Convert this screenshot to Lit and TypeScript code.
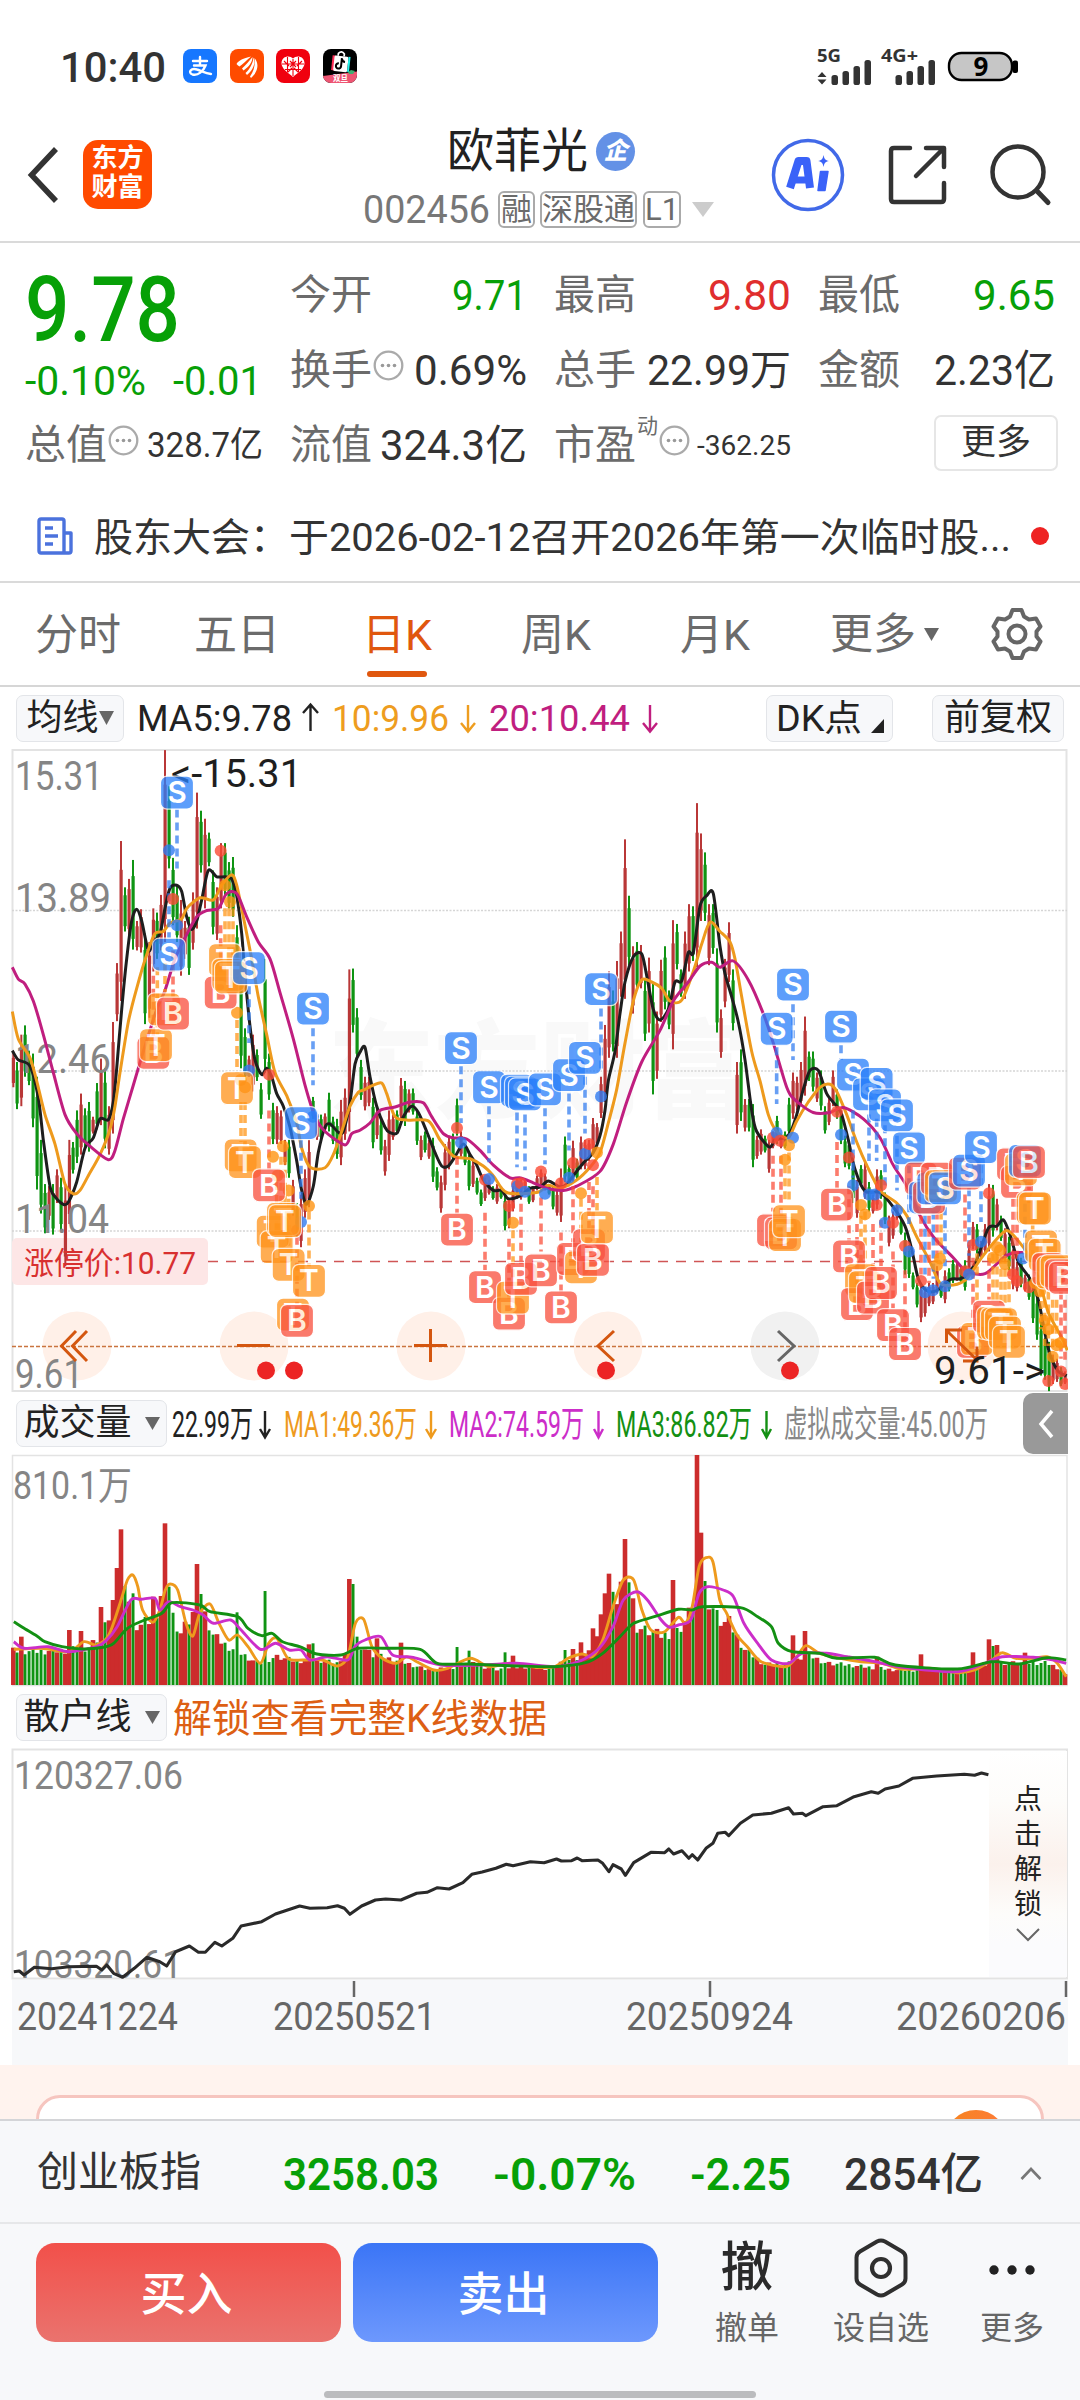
import { LitElement, html, svg, css } from "lit";
import { customElement, property } from "lit/decorators.js";

const RED = "#cc2c2c";
const GREEN = "#0f9413";
const UP = "#e02e2e";
const DOWN = "#07a007";

type Pt = [number, number];

/* ---------- helpers ---------- */

/** A run of text set to an exact width. */
const run = (t: string, w: number, size: number, color = "#333", weight = 400) => html`
  <svg class="run" width=${w} height=${size} viewBox="0 0 ${w} ${size}">
    <text x="0" y=${size * 0.86} font-size=${size} fill=${color} font-weight=${weight}
      textLength=${w} lengthAdjust="spacingAndGlyphs">${t}</text>
  </svg>`;

const parse = (s: string): Pt[] =>
  s.trim().split(/\s+/).map((p) => p.split(",").map(Number) as Pt);

const smooth = (p: Pt[]): string => {
  let d = `M${p[0][0].toFixed(1)} ${p[0][1].toFixed(1)}`;
  for (let i = 0; i < p.length - 1; i++) {
    const a = p[Math.max(0, i - 1)], b = p[i], c = p[i + 1], e = p[Math.min(p.length - 1, i + 2)];
    const k = 7;
    d += `C${[b[0] + (c[0] - a[0]) / k, b[1] + (c[1] - a[1]) / k, c[0] - (e[0] - b[0]) / k, c[1] - (e[1] - b[1]) / k, c[0], c[1]]
      .map((n) => n.toFixed(1)).join(" ")}`;
  }
  return d;
};

const straight = (p: Pt[]): string => "M" + p.map((q) => q.map((n) => n.toFixed(1)).join(" ")).join("L");

/* ---------- price chart data: three panels, each 360 wide ---------- */

const KX = 1 / 3;
const KY = 660 / 1568;
const px = (panel: number, x: number) => panel * 360 + x * KX;
const py = (y: number) => y * KY - 9;

const joinPanels = (parts: string[]): Pt[] =>
  parts.flatMap((s, i) => parse(s).map(([x, y]) => [px(i, x), py(y)] as Pt));

const MA5 = joinPanels([
  "37,738 55,760 90,775 115,850 130,950 150,1060 165,1085 190,1103 205,1098 230,1050 255,970 280,945 300,900 325,902 340,860 350,780 365,640 380,520 395,430 410,402 425,430 445,500 460,480 480,460 495,400 510,352 530,345 545,360 560,420 575,450 590,430 605,380 625,310 650,325 675,325 695,330 710,370 725,460 735,560 750,680 765,760 785,795 800,780 815,800 830,840 850,870 870,920 890,1000 905,1070 920,1103 940,1060 955,980 975,920 990,912 1015,932 1030,930 1050,860 1065,770 1080,742",
  "15,730 30,800 50,870 75,920 90,933 112,933 130,895 155,870 175,885 200,930 225,980 245,1012 265,1012 285,990 310,960 330,985 350,1010 370,1045 400,1070 425,1070 445,1090 480,1083 510,1065 540,1062 565,1048 600,1062 620,1055 640,1035 670,1005 700,980 720,940 735,880 745,810 765,740 780,650 795,575 820,515 845,508 860,560 880,640 900,665 925,640 945,575 965,572 985,505 1000,505 1020,395 1040,370 1060,365",
  "0,490 15,555 35,610 55,670 75,760 95,880 110,930 148,967 165,950 200,943 215,925 230,890 250,830 270,785 295,785 320,840 350,870 365,890 385,950 405,1020 435,1072 480,1075 520,1110 555,1155 575,1210 595,1280 620,1308 650,1308 690,1282 720,1280 745,1268 770,1235 805,1160 830,1155 850,1140 870,1175 895,1240 930,1280 955,1330 975,1410 990,1460 1015,1500 1040,1510",
]);
const MA10 = joinPanels([
  "37,645 55,710 90,755 110,810 135,890 165,960 195,1055 220,1078 240,1070 265,1035 300,985 330,925 345,870 360,790 385,670 410,590 440,510 465,460 490,455 510,435 545,425 560,400 600,375 640,380 665,345 695,320 710,345 730,420 755,520 775,610 800,700 825,790 860,845 890,910 905,970 930,1015 975,1016 1000,985 1025,930 1050,870 1075,837",
  "10,832 40,820 65,815 80,840 105,895 140,903 205,905 240,950 280,988 330,995 370,1012 400,1035 440,1075 530,1075 565,1058 600,1065 650,1045 690,1015 720,980 745,910 770,830 795,720 820,620 845,570 875,575 905,590 930,620 965,618 1000,550 1025,485 1050,433",
  "0,455 30,480 45,520 65,610 95,740 120,810 145,890 170,930 205,945 230,905 265,860 300,825 330,818 350,835 380,890 410,955 440,1010 480,1070 530,1100 560,1130 590,1180 630,1240 660,1290 700,1295 740,1280 780,1235 820,1195 860,1165 895,1190 930,1230 960,1290 985,1360 1025,1420 1042,1450",
]);
const MA20 = joinPanels([
  "37,540 55,568 75,580 100,620 130,700 160,790 195,890 230,935 270,965 325,997 345,975 370,900 400,820 430,740 470,640 495,595 525,520 555,470 590,420 620,405 655,400 680,365 710,365 740,420 775,480 810,520 840,600 880,710 915,820 945,895 975,930 1035,962 1055,935",
  "0,927 30,910 60,880 105,872 150,860 190,862 215,895 250,935 280,945 320,948 360,975 400,1010 450,1040 480,1040 520,1052 560,1065 610,1070 650,1060 720,1025 760,960 800,860 845,765 900,690 940,620 985,575 1020,537 1055,528",
  "0,540 40,525 85,570 130,650 160,720 200,825 225,855 280,885 330,885 370,873 430,900 480,945 520,1010 560,1060 600,1130 640,1180 700,1230 740,1262 795,1268 850,1230 880,1218 910,1218",
]);

const CANDLES = [
  "40,740,825r 51,765,877g 64,700,870r 75,678,800g 87,738,820g 99,745,920g 111,800,1068g 123,950,1125g 135,1055,1172g 147,1060,1140r 159,1055,1175g 171,1020,1100r 183,1040,1165g 196,1060,1250r 208,950,1150r 219,955,1030g 231,880,1005g 243,840,985r 255,875,968g 267,860,978g 279,895,935r 291,815,925g 303,757,915r 315,780,970g 327,870,985r 339,670,935r 351,530,668r 363,240,620r 375,350,455g 387,330,465r 399,285,498g 411,430,500r 423,402,505r 435,460,675g 448,480,660r 460,400,550r 471,410,520g 483,368,500r 495,24,480r 507,110,305g 519,280,440g 531,345,480g 543,380,560r 555,430,520r 567,420,558g 579,362,498r 591,125,448r 603,168,315g 615,187,400r 627,220,300g 639,310,462g 651,350,475r 663,245,400r 675,245,370g 687,290,400g 699,278,420g 711,440,600g 723,530,780g 735,685,800g 747,750,800r 759,700,835r 771,735,810g 783,815,900g 795,520,790g 807,745,855g 819,862,960g 831,870,960r 843,880,960r 855,950,1010r 867,950,1040g 879,1045,1130r 891,1100,1180g 903,1080,1205r 915,1020,1135r 927,950,1110r 939,848,900g 951,890,950r 963,890,950g 975,887,930r 987,838,930g 999,895,960g 1011,900,995g 1023,855,1010r 1035,828,950r 1048,545,930r 1059,543,695g 1071,637,760g",
  "3,760,855g 15,800,880r 27,800,870r 39,850,970g 51,870,948r 63,900,985g 75,950,1035r 87,880,1000r 99,890,950r 111,880,935g 123,803,905r 135,810,917g 147,830,885r 159,828,890g 171,880,962g 183,940,998r 195,930,980g 207,950,995r 219,945,1050g 231,1015,1070g 243,1035,1123r 255,960,1070r 267,940,1020r 279,935,1000g 291,852,940g 303,930,990r 315,960,1010g 327,985,1070g 339,1000,1062r 351,1040,1080g 363,1068,1107g 375,1040,1095r 387,1045,1080r 399,1060,1092g 411,1055,1102r 423,1060,1090g 435,1080,1165g 447,1090,1160r 459,1060,1120r 471,1040,1090r 483,1045,1092r 495,1045,1075r 507,1060,1102g 519,1060,1098r 531,1035,1070r 543,1020,1065r 555,1030,1070r 567,1055,1080g 579,1060,1115g 591,1070,1130r 603,1018,1145r 615,942,1050g 627,1010,1060g 639,952,1050r 651,995,1045g 663,942,1020r 675,950,1020r 687,950,1000r 699,898,980r 711,910,965r 723,800,898r 735,677,860r 747,550,755r 759,595,740g 771,525,755r 783,455,610r 795,236,615r 807,370,535g 819,490,650r 831,480,595g 843,487,590r 855,570,715g 867,517,695r 879,575,842g 891,645,805r 903,522,670r 915,490,640g 927,595,687g 939,428,735r 951,437,545g 963,545,610g 975,455,615r 987,390,550r 999,395,525g 1011,150,540r 1023,222,430r 1035,267,430g 1047,390,535r 1059,390,508g 1071,495,695g",
  "3,640,755r 15,520,635r 27,433,575r 39,545,690g 51,765,935r 63,735,905g 75,853,930r 87,853,930g 99,865,1015g 111,940,995r 123,925,985r 135,940,980g 147,950,1028r 159,930,970r 171,893,960g 183,940,970r 195,930,970g 207,850,940g 219,790,900r 231,800,880r 243,765,870r 255,657,845r 267,740,810g 279,740,835g 291,790,860r 303,785,880g 315,870,935g 327,850,915r 339,785,870r 351,830,900g 363,880,960g 375,940,1015g 387,950,1020g 399,1000,1100g 411,1045,1135r 423,1010,1060g 435,1005,1090r 447,1050,1120g 459,1080,1125r 471,1020,1115r 483,1022,1090g 495,1075,1150g 507,1130,1203r 519,1120,1185r 531,1100,1140r 543,1140,1175g 555,1170,1270g 567,1200,1278g 579,1265,1305g 591,1290,1348g 603,1290,1383r 615,1300,1370r 627,1290,1345r 639,1290,1340r 651,1250,1315r 663,1290,1325g 675,1260,1338r 687,1255,1310g 699,1235,1290g 711,1240,1285r 723,1250,1290g 735,1236,1308g 747,1200,1270r 759,1145,1210r 771,1150,1220g 783,1190,1230r 795,1150,1220r 807,1055,1215r 819,1057,1180g 831,1090,1165r 843,1130,1190g 855,1160,1240r 867,1180,1260g 879,1210,1305r 891,1240,1310r 903,1230,1300g 915,1270,1310r 927,1270,1330g 939,1290,1385g 951,1320,1425g 963,1380,1510g 975,1420,1520g 987,1430,1547g 999,1460,1530r 1011,1470,1525r 1023,1490,1535g 1035,1500,1530r",
].flatMap((s, i) =>
  s.split(" ").map((c) => {
    const [x, a, b] = c.slice(0, -1).split(",").map(Number);
    return { x: px(i, x), a: py(a), b: py(b), up: c.endsWith("r") };
  }));

const TAGS = [
  "T492,640 B460,743 T468,725 B519,650 S507,510 S531,125 T675,523 B662,600 T685,558 T693,564 S747,542 S939,638 S903,910 T711,827 T722,987 T735,1003 B807,1058 T818,1168 T830,1205 T849,1138 T855,1143 T866,1247 T927,1285 T879,1365 B891,1380",
  "S303,732 S387,825 S471,833 S483,838 S495,842 S555,830 S627,796 S675,755 S723,592 B291,1163 B375,1300 B447,1363 T459,1325 B483,1280 B543,1260 B603,1348 B639,1233 T663,1253 B687,1200 B699,1235 T711,1158",
  "S170,686 S219,581 S363,681 S399,795 S447,842 S470,817 S495,868 S531,892 S567,970 B351,1104 B387,1227 B159,1165 B183,1172 T195,1176 T207,1143 T423,1283 B411,1340 T435,1300 B459,1325 B483,1290 B519,1390 B555,1435 B602,1042 S615,1087 B627,1087 S640,1065 B651,1042 T663,1060 S675,1065 B735,1030 S747,1023 S783,967 B879,1008 B891,1050 T903,1020 S915,1000 B927,1003 T938,1112 T945,1113 T963,1203 T974,1223 B985,1257 T998,1265 T1010,1262 B1023,1272 B1035,1278 B759,1430 T771,1423 B807,1370 T819,1385 T831,1387 T843,1388 T855,1408 T867,1430",
];
const STEMS = [
  "b531,165,305 b507,333,470 r519,500,610 r460,560,715 o472,540,700 o495,530,600 r662,440,570 o675,400,490 o687,400,500 o699,400,540 o711,665,790 b747,585,720 o723,860,955 o735,860,965 r807,880,1020 b939,685,820 b903,950,1090 o830,1050,1160 o843,990,1110 o855,990,1110 o866,1090,1215 r891,1180,1340 o927,1120,1250",
  "b303,775,910 b387,870,1003 b471,885,1015 b495,890,1022 b555,875,1008 b627,840,975 b675,800,935 b723,638,790 r291,990,1125 r375,1123,1260 r447,1185,1330 r483,1102,1245 r543,1087,1215 r603,1170,1310 r639,1060,1195 r687,1050,1160 r699,1060,1190 o459,1165,1290 o663,1090,1215 o711,1038,1120",
  "b170,730,865 b219,628,760 b363,725,760 b399,880,1040 b447,890,1000 b470,900,1000 b495,915,1060 b531,940,1070 b567,1010,1150 r159,988,1120 r183,988,1130 o195,1010,1100 o207,980,1100 r351,955,1065 r387,1060,1190 o423,1130,1240 o435,1120,1245 r459,1150,1290 r483,1140,1250 r519,1215,1350 r555,1260,1400 r411,1150,1300 r603,1130,1270 b615,1130,1270 r627,1130,1290 b640,1120,1280 r651,1120,1240 o663,1120,1220 b675,1110,1250 r735,1080,1200 b747,1065,1225 b783,1010,1145 r759,1230,1390 o771,1220,1390 r807,1230,1330 o819,1220,1345 o831,1220,1345 o843,1225,1350 o855,1225,1355 o867,1255,1390 r879,1090,1240 r891,1090,1240 b915,1040,1230 r927,1050,1100 o938,1150,1240 o963,1240,1400 o974,1330,1440 o985,1310,1440 o998,1330,1450 o1010,1330,1440 r1023,1310,1470 r1035,1330,1480",
];
const DOTS = [
  "b507,262 r519,378 b531,440 r662,263 o675,345 o690,385 o711,648 b747,785 o722,808 o735,825 r807,795 o849,965 o819,990 o832,1035 o866,1070 r891,1165 b903,1145 o927,1107 b939,895",
  "r291,922 b303,957 r375,1045 b387,1043 r447,1107 o459,1147 r471,1055 b472,1060 r483,1053 b495,1073 r543,1025 b555,1078 r603,1053 b627,1040 r639,1005 b675,983 o663,1077 r687,960 r699,1010 o711,980 b723,847",
  "r159,945 b170,933 r180,952 b219,945 o207,963 o195,997 r351,883 b363,938 r387,992 b399,1058 o423,1105 o435,1127 r470,1105 b447,1080 b465,1080 r483,1058 b495,1147 r519,1147 b531,1117 r555,1202 b567,1215 r603,1285 b615,1312 b639,1307 b675,1298 o651,1248 o660,1232 r735,1262 b747,1270 r759,1200 b783,1192 r807,1077 o831,1205 o840,1212 o819,1230 o855,1245 r879,1270 r891,1285 b909,1232 r927,1300 o945,1290 o960,1310 o974,1380 o985,1400 r985,1523 o998,1465 o1010,1438 o1023,1432 r1023,1500 r1035,1530",
];
const TINT: Record<string, string> = { b: "#2f7bf0", r: "#fb4a35", o: "#ff9310", S: "#2b80fa", B: "#f9513f", T: "#ff941c" };

/* ---------- volume data ---------- */

const VX = 1080 / 1568;
const vol = (s: string): Pt[] => parse(s).map(([x, y]) => [x * VX, (y - 225) / 3]);

const VBASE = parse("20,815 60,815 100,810 130,800 150,760 165,680 180,640 200,740 220,720 240,650 262,760 290,670 310,770 330,800 350,820 375,850 400,830 430,845 460,840 490,850 515,780 540,825 570,840 590,850 620,870 650,865 680,850 720,870 760,860 800,865 820,840 850,830 870,740 885,650 910,640 925,740 960,770 985,760 1010,690 1025,640 1040,720 1060,740 1080,810 1110,855 1150,850 1170,820 1200,850 1250,860 1300,870 1350,870 1400,870 1440,845 1480,850 1520,850 1540,868 1548,892");
const VSPIKE = parse("31,770 100,750 118,753 147,681 164,660 169,564 176,448 187,665 194,640 222,650 234,648 240,430 246,620 287,552 293,642 345,697 385,633 448,793 454,790 508,597 513,612 519,770 546,775 583,788 663,801 681,812 733,817 745,827 820,810 832,807 844,787 862,745 873,703 879,640 885,581 902,605 908,477 914,607 920,655 977,600 1000,683 1012,225 1019,458 1024,603 1036,685 1042,690 1059,708 1152,766 1169,753 1275,830 1338,823 1413,817 1436,778 1442,798 1448,795 1488,818");

const volumeBars = () =>
  CANDLES.map((c, i) => {
    const x = c.x / VX;
    let k = 0;
    while (k < VBASE.length - 2 && VBASE[k + 1][0] < x) k++;
    const [x0, y0] = VBASE[k], [x1, y1] = VBASE[k + 1];
    let y = y0 + ((y1 - y0) * (x - x0)) / (x1 - x0);
    y += (((i * 37) % 23) / 23 - 0.5) * Math.max(10, (915 - y) * 0.24);
    const hit = VSPIKE.find((s) => Math.abs(s[0] - x) < 2.91);
    if (hit) y = hit[1];
    return { x: c.x, y: (y - 225) / 3, up: hit && y < 600 ? true : hit && y === 697 ? false : c.up };
  });

const V1 = vol("20,808 60,805 100,815 122,785 140,795 158,765 175,665 185,600 193,585 200,620 207,690 222,727 232,690 240,630 247,612 258,630 270,730 280,768 290,700 305,672 318,730 332,780 345,765 360,800 378,850 390,790 402,775 418,835 440,840 468,840 490,858 505,830 516,730 528,718 540,800 555,835 575,850 590,830 605,845 630,870 650,865 683,835 710,860 740,850 780,862 805,860 825,835 845,822 860,830 875,780 890,680 905,600 920,600 932,690 945,750 965,755 985,712 995,730 1005,680 1015,560 1025,533 1035,545 1045,660 1055,700 1070,765 1085,800 1105,845 1140,860 1155,835 1170,797 1190,820 1220,835 1250,845 1280,850 1310,868 1350,865 1390,878 1415,870 1440,840 1455,818 1475,835 1500,835 1520,830 1535,850 1548,890");
const V2 = vol("20,785 35,805 70,800 100,815 140,800 155,780 170,740 190,660 205,658 225,655 232,690 245,665 262,680 280,690 295,705 310,730 335,720 350,750 378,808 400,790 420,810 437,810 450,840 475,830 505,840 515,800 530,780 553,770 570,825 600,832 640,855 700,855 750,850 805,860 840,845 870,805 890,740 905,660 925,635 940,660 960,720 972,742 985,735 1003,720 1015,640 1027,620 1050,630 1065,650 1080,730 1100,790 1120,840 1145,850 1165,820 1200,820 1230,830 1270,845 1310,862 1390,875 1430,850 1455,830 1500,832 1530,840 1548,850");
const V3 = vol("20,725 35,745 55,770 65,785 90,800 120,807 150,802 165,790 185,745 210,720 235,700 250,668 290,675 305,695 345,710 360,745 380,767 395,760 410,785 435,800 460,822 495,825 520,805 560,805 610,808 635,850 680,852 740,857 805,860 850,848 875,820 900,770 920,730 950,710 985,688 1005,690 1020,680 1075,683 1100,710 1120,740 1130,790 1150,815 1190,820 1215,835 1270,832 1300,855 1390,867 1440,845 1480,852 1520,833 1548,840");

const HOLDERS = parse("20,845 28,843 35,855 50,832 75,836 100,830 140,829 148,840 155,825 165,850 178,862 195,835 213,802 232,815 242,828 255,785 275,768 288,787 298,787 312,757 322,768 338,745 350,708 380,695 400,672 435,648 450,655 475,653 490,647 500,655 508,673 525,648 545,630 560,627 582,630 605,610 620,607 635,593 652,597 672,578 685,553 700,546 720,535 735,523 745,527 770,515 790,518 808,507 815,513 830,512 838,504 845,512 868,510 875,520 884,545 890,524 902,537 908,556 920,518 945,487 965,488 971,477 978,492 990,482 1000,505 1005,494 1013,510 1025,475 1035,460 1042,430 1053,427 1058,437 1075,400 1093,375 1120,370 1145,353 1152,372 1165,370 1170,377 1195,350 1215,347 1240,320 1265,305 1275,310 1285,297 1305,288 1325,265 1360,258 1400,253 1415,256 1425,249 1435,254")
  .map(([x, y]) => [x * VX, (y - 177) / 3] as Pt);

/* ---------- elements ---------- */

const font = css`
  :host { font-family: Roboto, "Noto Sans CJK SC", sans-serif; color: #333; display: block; box-sizing: border-box; }
  * { box-sizing: border-box; }
  svg { display: block; flex: none; overflow: visible; }
`;

@customElement("status-bar")
class StatusBar extends LitElement {
  static styles = [font, css`
    .bar { height: 96px; padding: 37px 62px 0 60px; display: flex; justify-content: space-between; }
    .left, .right { display: flex; align-items: center; height: 58px; }
    .apps { display: flex; gap: 12.5px; margin-left: 17px; }
    .right { gap: 11px; align-items: flex-start; padding-top: 10px; }
    .sig text { font-weight: 700; font-family: "Noto Sans", sans-serif; }
    .num { font-family: "Noto Sans", sans-serif; }
  `];
  bars(x: number) {
    return [10, 14, 19, 25].map((h, i) => svg`<rect x=${x + i * 11} y=${38 - h} width="6.5" height=${h} rx="2.6" fill="#333"/>`);
  }
  render() {
    return html`<div class="bar">
      <div class="left">
        ${run("10:40", 106, 43, "#333", 500)}
        <div class="apps">
          <svg width="34" height="34" viewBox="0 0 34 34"><rect width="34" height="34" rx="8" fill="#1677ff"/>
            <g fill="none" stroke="#fff" stroke-width="2.4" stroke-linecap="round"><path d="M10 12H24M17 8V16.500M11 16.500H22.500C20.500 22 15 27 9.500 25.500C4.500 23.500 8 18.500 14 20.500C19 22 22 24.500 28 25"/></g></svg>
          <svg width="34" height="34" viewBox="0 0 34 34"><rect width="34" height="34" rx="8" fill="#ff4b00"/>
            <path d="M6.500 15C9 11 13 9.500 21 7.500C16 12 13 15 9.500 17.500C8.500 17 7.500 16 6.500 15Z M12 19.500C16 16 19 12 22.500 8C22.500 13 19 18 13.500 21.500Z M15.500 24C20 20 23 14 23.500 8.500C26 14 23 21 17 26Z M20 27.500C24 22 25.500 15 24.500 9C29.500 15 28 23 21 29Z" fill="#fff"/></svg>
          <svg width="34" height="34" viewBox="0 0 34 34"><rect width="34" height="34" rx="8" fill="#f0000e"/>
            <path d="M17 9.500C14 6 6 6.500 5.500 14C5.500 20 12 23.500 17 28C22 23.500 28.500 20 28.500 14C28 6.500 20 6 17 9.500Z" fill="#fff"/>
            <path d="M17 10V27M11.500 8V23.500M22.500 8V23.500M6 15H28M9 20.500H25M14 12L20 18M20 12L14 18M8 12L13 17M26 12L21 17M12 23L16 19M22 23L18 19" stroke="#f0000e" stroke-width="1.100" fill="none"/></svg>
          <svg width="34" height="34" viewBox="0 0 34 34"><rect width="34" height="34" rx="8" fill="#000"/>
            <path d="M0 27L34 22.500V26A8 8 0 0 1 26 34H8A8 8 0 0 1 0 27Z" fill="#ee5573"/>
            <g transform="rotate(6 17 13)"><rect x="9" y="7" width="3" height="15" fill="#fe2c55"/><rect x="11" y="7" width="14" height="15.500" rx="1.500" fill="#fff"/><path d="M25 7h2v15h-2z" fill="#25f4ee"/><path d="M14.500 7V4.500Q17.500 1 20.500 4.500V7" stroke="#fff" stroke-width="1.700" fill="none"/>
            <path d="M18.500 9V17A2.600 2.600 0 1 1 16 14.500M18.500 9.500Q19.500 12.500 22 12.500" stroke="#000" stroke-width="2" fill="none"/></g>
            <path d="M25 23l3-2 4 1-2 3-4 0z" fill="#3fae72"/>
            <text x="10" y="32" font-size="7.500" font-weight="700" fill="#fff">双旦</text></svg>
        </div>
      </div>
      <div class="right">
        <svg class="sig" width="55" height="38" viewBox="0 0 55 38">
          <text x="0" y="15" font-size="17.500" fill="#333" textLength="24" lengthAdjust="spacingAndGlyphs">5G</text>
          <path d="M0.500 30L5 25L9.500 30ZM0.500 32.500H9.500L5 37.500Z" fill="#333"/>${this.bars(14.5)}</svg>
        <svg class="sig" width="54" height="38" viewBox="0 0 54 38">
          <text x="-2" y="15" font-size="17.500" fill="#333" textLength="37" lengthAdjust="spacingAndGlyphs">4G+</text>${this.bars(12.5)}</svg>
        <svg width="70" height="36" viewBox="0 -5 70 36">
          <rect x="1" y="1" width="63" height="27" rx="12.500" fill="#c6c6c6" stroke="#000" stroke-width="2.400"/>
          <rect x="64.500" y="8.500" width="5.500" height="12.500" rx="2" fill="#000"/>
          <text class="num" x="33" y="24" font-size="26" font-weight="700" text-anchor="middle" fill="#000">9</text></svg>
      </div>
    </div>`;
  }
}

@customElement("header-tools")
class HeaderTools extends LitElement {
  static styles = [font, css`
    .row { display: flex; align-items: center; gap: 43px; height: 74px; }
  `];
  render() {
    return html`<div class="row">
      <svg width="74" height="74" viewBox="0 0 74 74">
        <circle cx="37" cy="37" r="34.500" fill="none" stroke="#4169e8" stroke-width="3.500"/>
        <path d="M19 50L27.500 23H35.500L39 50" fill="none" stroke="#3a62f8" stroke-width="8" stroke-linejoin="round"/><path d="M23 42H38" stroke="#3a62f8" stroke-width="7"/>
        <path d="M49.500 33.500H57L54 52.500H47Z" fill="#3a62f8" stroke="#3a62f8" stroke-width="1.500" stroke-linejoin="round"/>
        <path d="M52.500 17C53.500 21.500 54 22 58 23C54 24 53.500 24.500 52.500 29C51.500 24.500 51 24 47 23C51 22 51.500 21.500 52.500 17Z" fill="#3a62f8"/></svg>
      <svg width="60" height="60" viewBox="0 0 60 60"><g fill="none" stroke="#333" stroke-width="4.500" stroke-linecap="round" stroke-linejoin="round">
        <path d="M22 3H6Q3 3 3 6V54Q3 57 6 57H53Q56 57 56 54V38M38 3H56V22M55 4L28 31"/></g></svg>
      <svg width="60" height="60" viewBox="0 0 60 60"><circle cx="27" cy="27" r="25.500" fill="none" stroke="#333" stroke-width="4.500"/><path d="M45.500 45.500L57 57.500" stroke="#333" stroke-width="5" stroke-linecap="round"/></svg>
    </div>`;
  }
}

@customElement("stock-header")
class StockHeader extends LitElement {
  static styles = [font, css`
    .head { height: 147px; border-bottom: 2px solid #dadada; display: grid; grid-template-columns: 363px 1fr 309px; }
    .brand { display: flex; padding: 44px 0 0 27px; gap: 24px; }
    .logo { width: 69px; height: 69px; border-radius: 15px; background: #ff4a00; color: #fff; font-size: 26px; line-height: 29px; font-weight: 700; text-align: center; padding-top: 4px; }
    .name { display: flex; align-items: center; gap: 8px; padding: 29px 0 0 84px; height: 81px; font-size: 47px; line-height: 52px; color: #222; }
    .ent { width: 39px; height: 39px; border-radius: 50%; background: #6391e6; color: #fff; font-size: 24px; line-height: 38px; font-weight: 900; text-align: center; font-style: italic; }
    .code { display: flex; align-items: center; height: 36px; margin-top: 14px; }
    .tag { height: 37px; border: 2px solid #aaa; border-radius: 6px; font-size: 31px; line-height: 33px; color: #6b6b6b; text-align: center; white-space: nowrap; }
    .t1 { width: 37px; margin-left: 8px; } .t2 { width: 97px; margin-left: 5px; } .t3 { width: 38px; margin-left: 6px; }
    .tri { margin-left: 11px; }
    .tools { padding-top: 42px; }
  `];
  render() {
    return html`<div class="head">
      <div class="brand">
        <svg width="32" height="69" viewBox="0 0 32 69"><path d="M29 9L4.500 35L29 61" fill="none" stroke="#333" stroke-width="5.500"/></svg>
        <div class="logo">东方<br>财富</div>
      </div>
      <div>
        <div class="name"><span>欧菲光</span><span class="ent">企</span></div>
        <div class="code">${run("002456", 127, 38, "#777")}
          <span class="tag t1">融</span><span class="tag t2">深股通</span><span class="tag t3">L1</span>
          <svg class="tri" width="22" height="15"><path d="M0 0H22L11 15Z" fill="#ccc"/></svg></div>
      </div>
      <div class="tools"><header-tools></header-tools></div>
    </div>`;
  }
}

const more = html`<svg class="inf" width="31" height="31" viewBox="0 0 31 31"><circle cx="15.500" cy="15.500" r="13.800" fill="none" stroke="#aaa" stroke-width="2.300"/><g fill="#999"><circle cx="9.500" cy="15.500" r="1.800"/><circle cx="15.500" cy="15.500" r="1.800"/><circle cx="21.500" cy="15.500" r="1.800"/></g></svg>`;

@customElement("quote-panel")
class QuotePanel extends LitElement {
  static styles = [font, css`
    .grid { height: 248px; padding: 14px 24px 0 25px; display: grid; grid-template-columns: 238px 237px 237px 237px; column-gap: 27px; grid-template-rows: 75px 75px 75px; }
    .cell { display: flex; align-items: center; justify-content: space-between; font-size: 41px; color: #6b6b6b; line-height: 60px; white-space: nowrap; }
    .lab { display: flex; align-items: center; gap: 1px; }
    .inf { margin-top: -8px; }
    .big { grid-row: 1 / span 2; display: flex; flex-direction: column; padding-top: 7px; }
    .chg { display: flex; justify-content: space-between; padding-top: 7px; width: 237px; }
    .sup { font-size: 21px; align-self: flex-start; line-height: 24px; margin-top: -1px; }
    .btn { margin-left: 116px; width: 124px; height: 56px; border: 2px solid #e6e6e6; border-radius: 7px; font-size: 35px; line-height: 51px; text-align: center; color: #333; align-self: center; margin-top: -4px; }
    .news { height: 92px; display: flex; align-items: center; padding: 0 31px 0 37px; border-bottom: 2px solid #dadada; white-space: nowrap; }
    .news span { margin-left: 21px; display: flex; }
    .dot { width: 18px; height: 18px; border-radius: 50%; background: #ee2222; margin-left: auto; }
  `];
  cell(label: string, value: string, w: number, color = "#333", size = 43, info = false) {
    return html`<div class="cell"><span class="lab">${label}${info ? more : ""}</span>${run(value, w, size, color)}</div>`;
  }
  render() {
    return html`<div class="grid">
      <div class="big">${run("9.78", 155, 90, DOWN, 500)}
        <div class="chg">${run("-0.10%", 121, 40, DOWN)}${run("-0.01", 89, 40, DOWN)}</div></div>
      ${this.cell("今开", "9.71", 75, DOWN)}
      ${this.cell("最高", "9.80", 83, UP)}
      ${this.cell("最低", "9.65", 82, DOWN)}
      ${this.cell("换手", "0.69%", 113, "#333", 42, true)}
      ${this.cell("总手", "22.99万", 144, "#333", 42)}
      ${this.cell("金额", "2.23亿", 121, "#333", 42)}
      ${this.cell("总值", "328.7亿", 116, "#333", 35, true)}
      ${this.cell("流值", "324.3亿", 147, "#333", 42)}
      <div class="cell"><span class="lab">市盈<span class="sup">动</span>${more}</span>${run("-362.25", 94, 28)}</div>
      <div class="btn">更多</div>
    </div>
    <div class="news">
      <svg width="36" height="38" viewBox="0 0 36 38"><g fill="none" stroke="#4b72dd" stroke-width="3.400" stroke-linejoin="round"><path d="M27 36H4Q2 36 2 34V4Q2 2 4 2H25Q27 2 27 4V36H32Q34 36 34 34V16H27"/><path d="M8 11H16M8 19H21M8 27H16"/></g></svg>
      <span>${run("股东大会：", 195, 39)}${run("于2026-02-12召开2026年第一次临时股...", 722, 39)}</span>
      <i class="dot"></i>
    </div>`;
  }
}

@customElement("period-tabs")
class PeriodTabs extends LitElement {
  static styles = [font, css`
    .tabs { height: 104px; border-bottom: 2px solid #d6d6d6; display: flex; align-items: center; font-size: 43px; color: #6b6b6b; padding-left: 35px; }
    .tab { height: 104px; line-height: 106px; white-space: nowrap; margin-right: 73px; }
    .wide { margin-right: 82px; }
    .k { width: 71px; margin-right: 88px; }
    .last { margin-right: 79px; }
    .on { position: relative; color: #e0570e; }
    .on::after { content: ""; position: absolute; left: 5px; bottom: 9px; width: 60px; height: 6px; border-radius: 3px; background: #e0570e; }
    .more { display: flex; align-items: center; gap: 8px; margin-right: 51px; }
  `];
  render() {
    return html`<div class="tabs">
      <span class="tab">分时</span><span class="tab wide">五日</span>
      <span class="tab k on">日K</span><span class="tab k">周K</span><span class="tab k last">月K</span>
      <span class="tab more">更多<svg width="15" height="13"><path d="M0 0H15L7.500 13Z" fill="#666"/></svg></span>
      <svg width="54" height="54" viewBox="0 0 54 54"><g fill="none" stroke="#666" stroke-width="4" stroke-linejoin="round"><path d="M22.500 3H31.500L34 9.500L39 12.500L46 11.500L50.500 19.500L46.500 24.500V29.500L50.500 34.500L46 42.500L39 41.500L34 44.500L31.500 51H22.500L20 44.500L15 41.500L8 42.500L3.500 34.500L7.500 29.500V24.500L3.500 19.500L8 11.500L15 12.500L20 9.500Z"/><circle cx="27" cy="27" r="8.500"/></g></svg>
    </div>`;
  }
}

const pillCss = css`
  .pill { height: 47px; border: 1.5px solid #e3e5e9; border-radius: 7px; background: #f7f8fa; font-size: 36px; line-height: 43px; color: #222; display: flex; align-items: center; justify-content: center; white-space: nowrap; }
`;

/** One legend row drawn as positioned text runs: [text, x, width, colour]. */
type Leg = [string, number, number, string];
const legend = (w: number, size: number, base: number, items: Leg[]) => html`<svg width=${w} height="62" viewBox="0 0 ${w} 62">
  ${items.map(([t, x, tw, c]) => t === "↓" || t === "↑"
    ? svg`<path transform="translate(${x + tw / 2} ${base - 13}) scale(1 ${t === "↑" ? -1 : 1})" d="M0 -13V13M${-tw / 2 + 1} 5L0 13.500L${tw / 2 - 1} 5" fill="none" stroke=${c} stroke-width="2.400"/>`
    : svg`<text x=${x} y=${base} font-size=${size} fill=${c} textLength=${tw} lengthAdjust="spacingAndGlyphs">${t}</text>`)}</svg>`;

@customElement("price-chart")
class PriceChart extends LitElement {
  static styles = [font, pillCss, css`
    .row { height: 62px; display: flex; align-items: center; padding: 0 16px; }
    .p1 { width: 108px; } .p2 { width: 127px; margin-left: auto; } .p3 { width: 132px; margin-left: 39px; }
    .corner { margin-left: 9px; }
    .bt { font-family: Inter, sans-serif; font-weight: 600; }
    .wm { font-weight: 900; }
    .chart { height: 643px; }
  `];
  nav(i: number) {
    const x = 77 + i * 177;
    return svg`<circle cx=${x} cy="597" r="34.500" fill=${i === 4 ? "#f1f1f1" : "#fff0e8"}/>`;
  }
  render() {
    const K = "#1e1e1e";
    const glyph = (d: string, c = "#d4560f") => svg`<path d=${d} fill="none" stroke=${c} stroke-width="3"/>`;
    const axis: [string, number, number][] = [["15.31", 41, 88], ["13.89", 163, 96], ["12.46", 323.5, 96], ["11.04", 484, 94], ["9.61", 639, 68]];
    return html`<div class="row">
        <span class="pill p1">均线<svg width="15" height="14"><path d="M0 0H15L7.500 14Z" fill="#666"/></svg></span>
        ${legend(640, 37, 44, [["MA5:9.78", 13, 155, "#222"], ["↑", 178, 17, "#222"], ["10:9.96", 208, 117, "#ee9d1f"], ["↓", 336, 16, "#ee9d1f"], ["20:10.44", 365, 141, "#c01e7f"], ["↓", 518, 16, "#c01e7f"]])}
        <span class="pill p2">${run("DK点", 86, 36, "#222")}<svg class="corner" width="13" height="34"><path d="M13 18V32H0Z" fill="#222"/></svg></span>
        <span class="pill p3">前复权</span>
      </div>
      <svg class="chart" width="1080" height="643" viewBox="0 0 1080 643">
        <defs><clipPath id="cp"><rect x="11" y="0" width="1057" height="643"/></clipPath></defs>
        <text class="wm" x="328" y="360" font-size="106" fill="#f9f9f9" textLength="424">东方财富</text>
        <rect x="12.500" y="1" width="1054" height="641" fill="none" stroke="#e3e3e3" stroke-width="2"/>
        ${[161.5, 322, 482].map((y) => svg`<path d="M12 ${y}H1067" stroke="#d5d5d5" stroke-width="1.500" stroke-dasharray="2 1.500"/>`)}
        <path d="M208 512.500H1067" stroke="#d05555" stroke-width="1.500" stroke-dasharray="10 8"/>
        <rect x="12" y="489" width="196" height="47" rx="5" fill="#fde6e6"/>
        ${[0, 1, 2, 3, 4, 5].map((i) => this.nav(i))}
        <path d="M12 597.500H1067" stroke="#c9743f" stroke-width="1.500" stroke-dasharray="4 2"/>
        <g clip-path="url(#cp)">
          ${CANDLES.map((c) => {
            const h = c.b - c.a;
            return svg`<rect x=${c.x - 1} y=${c.a} width="2" height=${h} fill=${c.up ? "#b93737" : GREEN}/><rect x=${c.x - 1.5} y=${c.a + h * 0.18} width="3.200" height=${h * 0.7} fill=${c.up ? "#b93737" : GREEN}/>`;
          })}
        </g>
        ${axis.map(([t, y, w]) => svg`<text x="15" y=${y} font-size="40" fill="#858585" textLength=${w} lengthAdjust="spacingAndGlyphs">${t}</text>`)}
        <g clip-path="url(#cp)" fill="none" stroke-width="3" stroke-linejoin="round">
          <path d=${smooth(MA5)} stroke=${K}/><path d=${smooth(MA10)} stroke="#ee9a1d"/><path d=${smooth(MA20)} stroke="#c01e7f"/>
        </g>
        <text x="171" y="38" font-size="39" fill=${K} textLength="131" lengthAdjust="spacingAndGlyphs">&lt;-15.31</text>
        <g clip-path="url(#cp)">
          ${STEMS.flatMap((s, i) => s.split(" ").map((m) => {
            const [x, a, b] = m.slice(1).split(",").map(Number);
            return svg`<path d="M${px(i, x)} ${py(a)}V${py(b)}" stroke=${TINT[m[0]]} stroke-width="3.600" stroke-dasharray="8 5" opacity=".72"/>`;
          }))}
          ${DOTS.flatMap((s, i) => s.split(" ").map((m) => {
            const [x, y] = m.slice(1).split(",").map(Number);
            return svg`<circle cx=${px(i, x)} cy=${py(y)} r="6" fill=${TINT[m[0]]} opacity=".8"/>`;
          }))}
          ${TAGS.flatMap((s, i) => s.split(" ").map((m) => {
            const [x, y] = m.slice(1).split(",").map(Number);
            const cx = px(i, x), cy = py(y);
            return svg`<g opacity=".76"><rect x=${cx - 16.5} y=${cy - 16.5} width="33" height="33" rx="6.500" fill=${TINT[m[0]]} stroke="#fff" stroke-width="1.200"/>
              <text class="bt" x=${cx} y=${cy + 10.5} font-size="30" text-anchor="middle" fill="#fff">${m[0]}</text></g>`;
          }))}
        </g>
        ${glyph("M76 582L61.500 597L76 612M87 582L72.500 597L87 612")}
        ${glyph("M237 596.500H270")}${glyph("M414 596.500H447M430.500 580V613")}
        ${glyph("M614 582L598 597L614 612")}${glyph("M778 582L794 597L778 612", "#666")}
        ${glyph("M946.500 594V581H962M947 582L977 611M977 597.500V612H963")}
        ${[266, 294, 606, 790].map((x) => svg`<circle cx=${x} cy="621.500" r="9" fill="#ec2424"/>`)}
        <text x="24" y="524.500" font-size="31" fill="#d83030" textLength="172" lengthAdjust="spacingAndGlyphs">涨停价:10.77</text>
        <text x="934" y="635" font-size="39" fill=${K} textLength="111" lengthAdjust="spacingAndGlyphs">9.61-&gt;</text>
      </svg>`;
  }
}

@customElement("volume-chart")
class VolumeChart extends LitElement {
  static styles = [font, pillCss, css`
    .row { height: 63px; display: flex; align-items: center; padding-left: 16px; }
    .pill { width: 151px; gap: 13px; }
    .pull { margin-left: auto; margin-right: 12px; width: 45px; height: 61px; background: #999; border-radius: 10px 0 0 10px; display: flex; align-items: center; justify-content: center; }
  `];
  render() {
    const line = (p: Pt[], c: string) => svg`<path d=${smooth(p)} fill="none" stroke=${c} stroke-width="2.900"/>`;
    const O = "#ee9a1d", P = "#cc2ec9", G = "#139013";
    return html`<div class="row">
        <span class="pill">成交量<svg width="15" height="13"><path d="M0 0H15L7.500 13Z" fill="#666"/></svg></span>
        ${legend(840, 36, 44, [["22.99万", 5, 81, "#222"], ["↓", 92, 12, "#222"], ["MA1:49.36万", 117, 133, O], ["↓", 258, 12, O], ["MA2:74.59万", 282, 135, P], ["↓", 426, 11, P], ["MA3:86.82万", 449, 136, G], ["↓", 594, 11, G], ["虚拟成交量:45.00万", 617, 204, "#888"]])}
        <span class="pull"><svg width="16" height="28" viewBox="0 0 16 28"><path d="M14 1L3 14L14 27" fill="none" stroke="#fff" stroke-width="3.500"/></svg></span>
      </div>
      <svg width="1080" height="231" viewBox="0 0 1080 231">
        <rect x="12.500" y="0.500" width="1054.500" height="230" fill="none" stroke="#e3e3e3" stroke-width="1.500"/>
        ${volumeBars().map((b) => svg`<rect x=${b.x - (b.up ? 2.3 : 1.4)} y=${b.y} width=${b.up ? 4.6 : 2.9} height=${230 - b.y} fill=${b.up ? RED : GREEN}/>`)}
        <text x="13" y="44" font-size="39" fill="#858585" textLength="119" lengthAdjust="spacingAndGlyphs">810.1万</text>
        ${line(V1, O)}${line(V2, P)}${line(V3, G)}
      </svg>`;
  }
}

@customElement("holder-chart")
class HolderChart extends LitElement {
  static styles = [font, pillCss, css`
    .row { height: 63px; display: flex; align-items: center; padding-left: 16px; gap: 6px; }
    .pill { width: 151px; gap: 13px; }
    .plot { position: relative; height: 231px; }
    .lock { position: absolute; left: 989px; top: 2px; width: 78px; height: 226px; padding: 31px 0 0; background: linear-gradient(#fff, #fdfcfa 22%, #fbf1ec 50%, #fdfcfa 72%, #fbfbfd 85%); display: flex; flex-direction: column; align-items: center; font-size: 28px; line-height: 35px; color: #222; }
    .lock svg { margin-top: 6px; }
    .axis { height: 85px; margin: 0 12px; background: #f7f8fa; }
  `];
  render() {
    const tick = (x: number) => svg`<path d="M${x} 1V17" stroke="#666" stroke-width="2.500"/>`;
    const date = (t: string, x: number, w: number) => svg`<text x=${x} y="50" font-size="38" fill="#666" textLength=${w} lengthAdjust="spacingAndGlyphs">${t}</text>`;
    return html`<div class="row">
        <span class="pill">散户线<svg width="15" height="13"><path d="M0 0H15L7.500 13Z" fill="#666"/></svg></span>
        ${run("解锁查看完整K线数据", 374, 39, "#dd5f14")}
      </div>
      <div class="plot">
        <svg width="1080" height="231" viewBox="0 0 1080 231">
          <rect x="12.500" y="0.500" width="1054.500" height="229" fill="none" stroke="#e3e3e3" stroke-width="2"/>
          <text x="14" y="40" font-size="38" fill="#858585" textLength="169" lengthAdjust="spacingAndGlyphs">120327.06</text>
          <text x="14" y="229" font-size="38" fill="#858585" textLength="168" lengthAdjust="spacingAndGlyphs">103320.61</text>
          <path d=${straight(HOLDERS)} fill="none" stroke="#2a2a2a" stroke-width="3.100" stroke-linejoin="round"/>
        </svg>
        <div class="lock"><span>点</span><span>击</span><span>解</span><span>锁</span><svg width="24" height="13" viewBox="0 0 24 13"><path d="M1 1L12 12L23 1" fill="none" stroke="#666" stroke-width="2"/></svg></div>
      </div>
      <div class="axis"><svg width="1056" height="85" viewBox="0 0 1056 85">
        ${tick(342)}${tick(698)}${tick(1054)}
        ${date("20241224", 5, 161)}${date("20250521", 261, 163)}${date("20250924", 614, 167)}${date("20260206", 884, 170)}
      </svg></div>`;
  }
}

@customElement("bottom-bar")
class BottomBar extends LitElement {
  @property() index = "创业板指";
  static styles = [font, css`
    .promo { height: 54px; background: #fff3ee; overflow: hidden; padding: 30px 36px 0; }
    .card { height: 60px; border: 3px solid #f6c5bf; border-radius: 24px; background: #fff; display: flex; justify-content: flex-end; padding: 12px 34px 0 0; }
    .orb { width: 62px; height: 62px; flex: none; border-radius: 50%; background: linear-gradient(100deg, #f6851f, #ff7a3d); }
    .idx { height: 105px; background: #f7f8fa; border-top: 2px solid #d4d5d8; border-bottom: 2px solid #e6e7e9; display: flex; align-items: center; padding: 4px 0 0 37px; font-size: 41px; line-height: 60px; }
    .idx > span:first-child { margin-top: -3px; }
    .a { margin-left: 82px; } .b { margin-left: 54px; } .c { margin-left: 54px; } .d { margin-left: 53px; } .e { margin-left: 37px; }
    .acts { height: 177px; background: #f7f8fa; padding: 19px 0 0 36px; display: flex; }
    .btn { width: 305px; height: 99px; border-radius: 19px; color: #fff; font-size: 46px; font-weight: 500; line-height: 102px; text-align: center; margin-right: 12px; text-indent: -4px; }
    .buy { background: linear-gradient(#f2504a, #ea736e); }
    .sell { background: linear-gradient(#3b75f6, #6d98fd); }
    .act { display: flex; flex-direction: column; align-items: center; font-size: 32px; line-height: 40px; color: #666; white-space: nowrap; }
    .ico { height: 50px; display: flex; align-items: center; margin-bottom: 15px; color: #2a2a2a; font-size: 53px; font-weight: 500; }
    .x { width: 66px; margin-left: 44px; } .y { width: 100px; margin-left: 51px; } .z { width: 66px; margin-left: 48px; }
    .dots { margin-top: 2px; }
    .home { display: flex; justify-content: center; height: 10px; background: #f7f8fa; margin-top: -10px; position: relative; }
    .home i { width: 432px; height: 7px; border-radius: 4px; background: #bbbcbe; }
  `];
  render() {
    return html`<div class="promo"><div class="card"><i class="orb"></i></div></div>
      <div class="idx"><span>${this.index}</span>
        <span class="a">${run("3258.03", 156, 44, DOWN, 600)}</span><span class="b">${run("-0.07%", 143, 44, DOWN, 600)}</span>
        <span class="c">${run("-2.25", 101, 44, DOWN, 600)}</span><span class="d">${run("2854亿", 139, 44, "#333", 500)}</span>
        <svg class="e" width="22" height="13" viewBox="0 0 22 13"><path d="M1.500 12L11 2L20.500 12" fill="none" stroke="#777" stroke-width="2.600"/></svg></div>
      <div class="acts">
        <div class="btn buy">买入</div><div class="btn sell">卖出</div>
        <div class="act x"><span class="ico">撤</span>撤单</div>
        <div class="act y"><span class="ico"><svg width="54" height="60" viewBox="0 0 54 60"><path d="M23 3.500Q27 1.500 31 3.500L48 13.500Q51.500 15.500 51.500 19.500V40.500Q51.500 44.500 48 46.500L31 56.500Q27 58.500 23 56.500L6 46.500Q2.500 44.500 2.500 40.500V19.500Q2.500 15.500 6 13.500Z" fill="none" stroke="#2f2f2f" stroke-width="4"/><circle cx="27" cy="30" r="9" fill="none" stroke="#2f2f2f" stroke-width="4.200"/></svg></span>设自选</div>
        <div class="act z"><span class="ico"><svg class="dots" width="46" height="10"><g fill="#222"><circle cx="5" cy="6" r="4.700"/><circle cx="23" cy="6" r="4.700"/><circle cx="41" cy="6" r="4.700"/></g></svg></span>更多</div>
      </div>
      <div class="home"><i></i></div>`;
  }
}

@customElement("app-root")
class AppRoot extends LitElement {
  static styles = [font, css`
    :host { width: 1080px; height: 2400px; background: #fff; overflow: hidden; }
  `];
  render() {
    return html`
      <status-bar></status-bar>
      <stock-header></stock-header>
      <quote-panel></quote-panel>
      <period-tabs></period-tabs>
      <price-chart></price-chart>
      <volume-chart></volume-chart>
      <holder-chart></holder-chart>
      <bottom-bar></bottom-bar>`;
  }
}
